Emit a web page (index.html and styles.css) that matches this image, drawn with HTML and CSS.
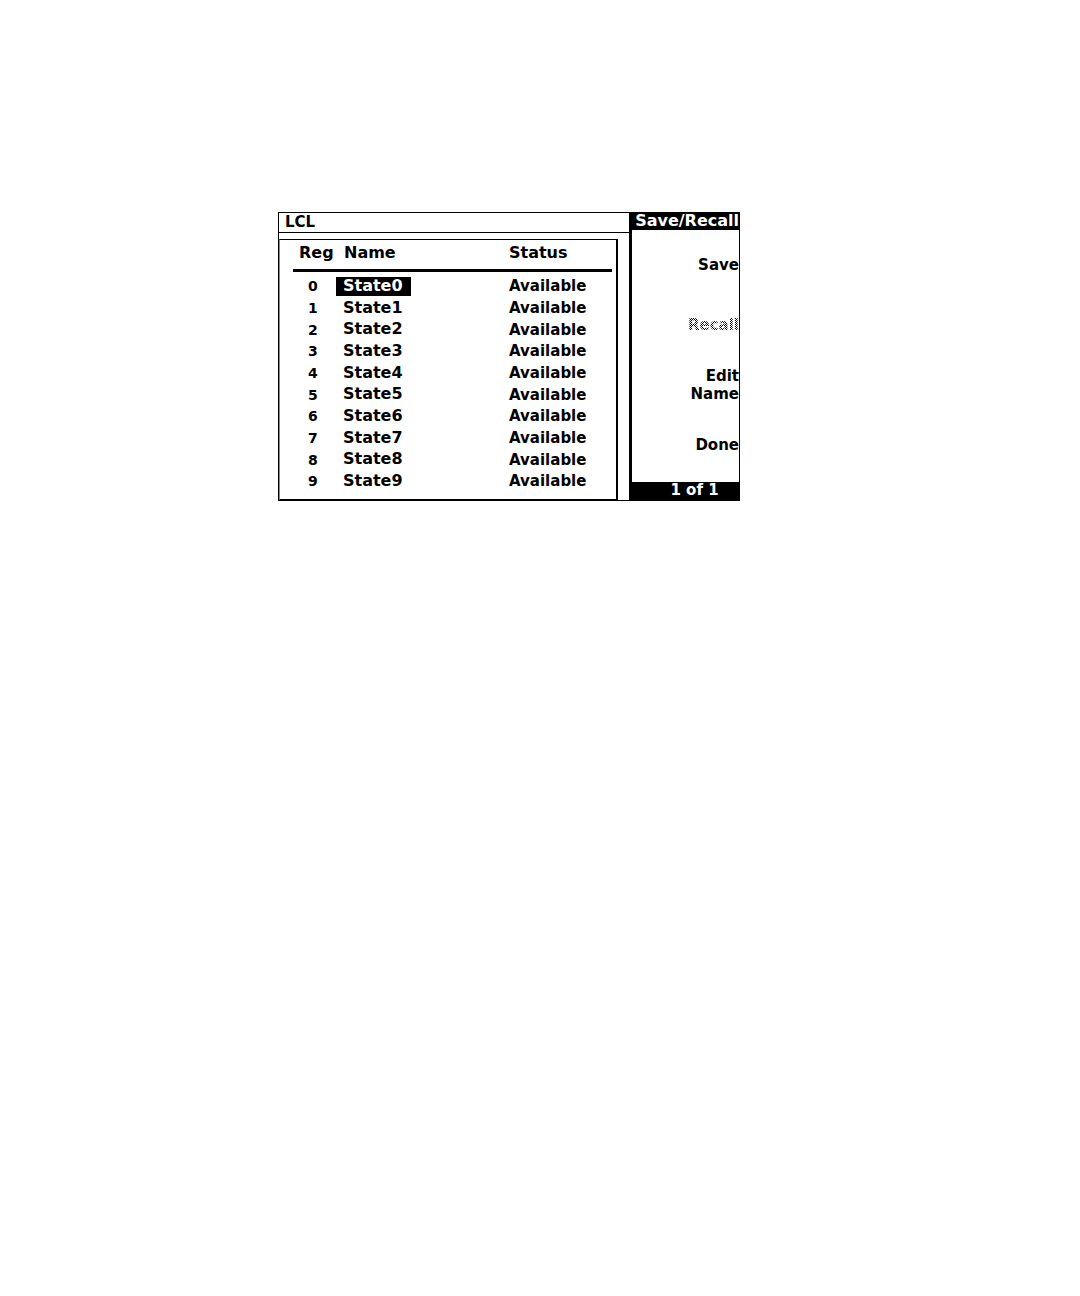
FILE: index.html
```html
<!DOCTYPE html>
<html lang="en">

<head>
	<meta charset="utf-8">
	<meta name="viewport" content="width=device-width, initial-scale=1">
	<title>Save/Recall</title>
	<link rel="stylesheet" href="styles.css">
</head>
<body>

	<div class="screen">
		<main class="main">
			<header class="status-bar">LCL</header>

			<div class="panel">
				<table class="registers">
					<thead>
						<tr><th class="reg" scope="col">Reg</th><th class="name" scope="col">Name</th><th scope="col">Status</th></tr>
					</thead>
					<tbody>
						<tr><td class="reg">0</td><td><span class="state selected">State0</span></td><td>Available</td></tr>
						<tr><td class="reg">1</td><td><span class="state">State1</span></td><td>Available</td></tr>
						<tr><td class="reg">2</td><td><span class="state">State2</span></td><td>Available</td></tr>
						<tr><td class="reg">3</td><td><span class="state">State3</span></td><td>Available</td></tr>
						<tr><td class="reg">4</td><td><span class="state">State4</span></td><td>Available</td></tr>
						<tr><td class="reg">5</td><td><span class="state">State5</span></td><td>Available</td></tr>
						<tr><td class="reg">6</td><td><span class="state">State6</span></td><td>Available</td></tr>
						<tr><td class="reg">7</td><td><span class="state">State7</span></td><td>Available</td></tr>
						<tr><td class="reg">8</td><td><span class="state">State8</span></td><td>Available</td></tr>
						<tr><td class="reg">9</td><td><span class="state">State9</span></td><td>Available</td></tr>
					</tbody>
				</table>
			</div>
		</main>

		<nav class="menu">
			<h1 class="menu-title">Save/Recall</h1>
			<div class="softkeys">
				<button type="button">Save</button>
				<button type="button" disabled><span class="dither">Recall</span></button>
				<button type="button">Edit<br>Name</button>
				<button type="button">Done</button>
			</div>
			<div class="menu-page">1 of 1</div>
		</nav>
	</div>

</body>
</html>
```

FILE: styles.css
```css
* {
	box-sizing: border-box;
}

body {
	margin: 0;
	padding: 212px 340px 40px 278px;
	background: #fff;
	color: #000;
	font: bold 15px/18px "DejaVu Sans", sans-serif;
}

.screen {
	display: grid;
	grid-template-columns: 1fr 110px;
	min-width: 420px;
	border: 1px solid #000;
}

.main {
	display: flex;
	flex-direction: column;
}

.status-bar {
	height: 20px;
	padding-left: 6px;
	border-bottom: 1px solid #000;
}

/* register list */
.panel {
	flex: 1;
	margin: 6px 11px 0 0;
	padding: 0 4px 7px 13px;
	border: solid #000;
	border-width: 1px 2px 1px 1px;
	border-left-color: #888;
}

.registers {
	width: 100%;
	table-layout: fixed;
	border-collapse: separate;
	border-spacing: 0;
}

.registers th {
	height: 32px;
	padding: 0 0 3px;
	border-bottom: 3px solid #000;
	text-align: left;
	font-size: 16px;
}

.registers th.reg {
	width: 43px;
	padding-left: 6px;
}

.registers th.name {
	width: 173px;
	padding-left: 8px;
}

.registers tbody::before {
	content: "";
	display: table-row;
	height: 3px;
}

.registers td {
	height: 22px;
	padding: 0;
}

.registers tr:nth-child(3n) td {
	height: 21px;
}

.registers td.reg {
	padding-left: 15px;
	font-size: 14px;
}

.state {
	display: inline-block;
	padding: 0 8px 1px 7px;
	font-size: 16px;
}

.selected {
	background: #000;
	color: #fff;
}

/* softkey column */
.menu {
	display: flex;
	flex-direction: column;
	border-left: 3px solid #000;
}

.menu-title {
	height: 17px;
	margin: 0;
	background: #000;
	color: #fff;
	font-size: 16px;
	line-height: 15px;
	text-align: right;
}

.softkeys {
	flex: 1;
	display: grid;
	grid-template-rows: repeat(4, 1fr);
	padding: 5px 0 7px;
}

.softkeys button {
	padding: 0;
	border: 0;
	background: none;
	color: #000;
	font: inherit;
	text-align: right;
	cursor: pointer;
}

.softkeys button:disabled {
	cursor: default;
}

/* greyed key, drawn in a pixel checker */
.dither {
	background: repeating-conic-gradient(#000 0 25%, #fff 0 50%) 0 0 / 2px 2px;
	-webkit-background-clip: text;
	background-clip: text;
	color: transparent;
}

.menu-page {
	height: 18px;
	padding-left: 18px;
	background: #000;
	color: #fff;
	text-align: center;
	line-height: 17px;
}
```
